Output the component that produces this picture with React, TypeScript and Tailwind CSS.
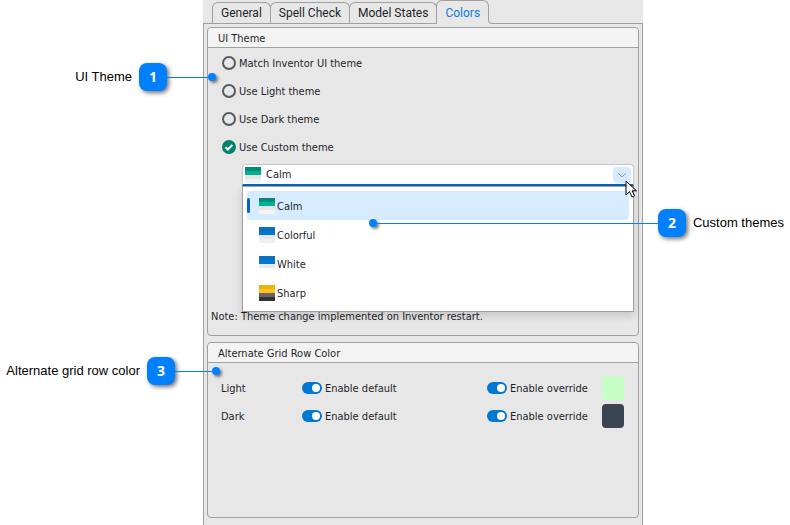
import React, { useState } from 'react'

type Theme = { name: string; bands: [string, string, string, string] }

const themes: Theme[] = [
  { name: 'Calm', bands: ['#028a76', '#00b294', '#e6e6e6', '#f3f3f3'] },
  { name: 'Colorful', bands: ['#106ebe', '#0078d4', '#e9e9e9', '#f0f0f0'] },
  { name: 'White', bands: ['#106ebe', '#0078d4', '#e9e9e9', '#ffffff'] },
  { name: 'Sharp', bands: ['#eab308', '#ffc020', '#666666', '#333333'] },
]

const modes = [
  'Match Inventor UI theme',
  'Use Light theme',
  'Use Dark theme',
  'Use Custom theme',
]

const rows = [
  { name: 'Light', swatch: 'bg-[#c5ffc5]' },
  { name: 'Dark', swatch: 'bg-[#3b4452]' },
]

function ThemeIcon({ theme, className }: { theme: Theme; className?: string }) {
  return (
    <svg width="16" height="16" viewBox="0 0 16 16" className={className} aria-hidden="true">
      <rect width="16" height="4" fill={theme.bands[0]} />
      <rect y="4" width="16" height="4" fill={theme.bands[1]} />
      <rect y="8" width="16" height="4" fill={theme.bands[2]} />
      <rect y="12" width="16" height="4" fill={theme.bands[3]} />
    </svg>
  )
}

function Tab(props: { label: string; active?: boolean; onClick: () => void }) {
  return (
    <button
      type="button"
      role="tab"
      aria-selected={!!props.active}
      onClick={props.onClick}
      className={
        props.active
          ? 'relative -mb-px h-6 rounded-t-md border border-b-0 border-[#a0a0a0] bg-[#e7e7e7] px-2 text-xs text-[#0f7bd8]'
          : 'relative -mr-px h-[21px] rounded-t-md border border-b-0 border-[#a0a0a0] px-2 text-xs'
      }
    >
      {props.label}
      {props.active && (
        <svg width="4" height="4" className="absolute -right-1 bottom-0" aria-hidden="true">
          <path d="M0 0v4h4V3.5Q.5 3.500.5 0" fill="#e7e7e7" />
          <path d="M.5 0Q.5 3.500 4 3.500" fill="none" stroke="#a0a0a0" />
        </svg>
      )}
    </button>
  )
}

function Group(props: { title: string; className: string; children: React.ReactNode }) {
  return (
    <section className={`relative rounded border border-[#a0a0a0] ${props.className}`}>
      <h2 className="h-5 rounded-t border-b border-[#a0a0a0] bg-[#f3f3f3] px-2.5 pt-px leading-5">
        {props.title}
      </h2>
      {props.children}
    </section>
  )
}

function Badge({ children }: { children: React.ReactNode }) {
  return (
    <span className="flex size-7 shrink-0 items-center justify-center rounded-lg bg-[#0080ff] font-['Open_Sans',sans-serif] text-sm font-bold text-white shadow-[2px_2px_4px_rgba(0,0,0,0.55)]">
      {children}
    </span>
  )
}

function Dot() {
  return (
    <span className="size-2 shrink-0 rounded-full bg-[#0080ff] shadow-[2px_2px_3px_rgba(0,0,0,0.5)]" />
  )
}

function Callout(props: { n: number; text: string; line: string; side: 'left' | 'right'; className: string }) {
  return (
    <div
      className={`pointer-events-none absolute z-20 flex items-center whitespace-nowrap font-['Liberation_Sans',Arial,sans-serif] text-[13px] text-black ${
        props.side === 'right' ? 'flex-row-reverse' : ''
      } ${props.className}`}
    >
      <span className={props.side === 'right' ? 'ml-[7px]' : 'mr-[7px]'}>{props.text}</span>
      <Badge>{props.n}</Badge>
      <span className={`h-px bg-[#0080ff] ${props.line}`} />
      <Dot />
    </div>
  )
}

function Toggle({ label }: { label: string }) {
  const [on, setOn] = useState(true)
  return (
    <label className="flex items-center gap-[3px]">
      <input
        type="checkbox"
        role="switch"
        checked={on}
        onChange={() => setOn(!on)}
        className="flex h-3 w-5 appearance-none items-center rounded-full bg-[#8a8a8a] px-0.5 before:size-2 before:rounded-full before:bg-white checked:justify-end checked:bg-[#0078d4]"
      />
      <span className="pt-0.5">{label}</span>
    </label>
  )
}

function ThemePicker() {
  const [open, setOpen] = useState(true)
  const [selected, setSelected] = useState('Calm')
  const current = themes.find((theme) => theme.name === selected) ?? themes[0]

  return (
    <div className="relative ml-[34px] mr-1 mt-[3px]">
      <div className="relative">
        <select
          aria-label="Custom theme"
          value={selected}
          onChange={(e) => setSelected(e.target.value)}
          onMouseDown={(e) => {
            e.preventDefault()
            setOpen(!open)
          }}
          className="block h-[22px] w-full appearance-none rounded-t border border-b-2 border-[#c8c8c8] border-b-[#0067c0] bg-white pl-[23px] pt-0.5 outline-none"
        >
          {themes.map((theme) => (
            <option key={theme.name}>{theme.name}</option>
          ))}
        </select>
        <ThemeIcon theme={current} className="pointer-events-none absolute left-[3px] top-[3px]" />
        <span className="pointer-events-none absolute right-[3px] top-[3px] flex h-4 w-[18px] items-center justify-center rounded bg-[#d6ebff]">
          <svg width="10" height="6" viewBox="0 0 10 6" fill="none" stroke="#8c9cac" aria-hidden="true">
            <path d="M1 1l4 4 4-4" />
          </svg>
        </span>
        <svg width="13" height="19" viewBox="0 0 13 19" className="pointer-events-none absolute -right-1 top-4 z-20" aria-hidden="true">
          <path d="M1 1v14l3.500-3.300 2.500 5.300 2.500-1.200-2.300-5H11.500z" fill="#fff" stroke="#000" />
        </svg>
      </div>
      {open && (
        <ul
          role="listbox"
          aria-label="Themes"
          className="absolute inset-x-0 top-[22px] z-10 border border-[#a0a0a0] bg-white px-1 py-1 shadow-[0_4px_8px_rgba(0,0,0,0.14)]"
        >
          {themes.map((theme) => (
            <li
              key={theme.name}
              role="option"
              aria-selected={theme.name === selected}
              onClick={() => setSelected(theme.name)}
              className={`relative flex h-[29px] items-center gap-0.5 rounded pl-3 ${
                theme.name === selected ? 'bg-[#d6ebff]' : ''
              }`}
            >
              {theme.name === selected && (
                <span className="absolute left-0 h-[15px] w-[3px] rounded-full bg-[#0067c0]" />
              )}
              <ThemeIcon theme={theme} />
              <span className="pt-1">{theme.name}</span>
            </li>
          ))}
        </ul>
      )}
      <Callout n={2} text="Custom themes" line="flex-1" side="right" className="-right-[150px] left-[127px] top-[45px]" />
    </div>
  )
}

export default function App() {
  const [tab, setTab] = useState('Colors')
  const [mode, setMode] = useState('Use Custom theme')

  return (
    <div className="min-h-screen overflow-hidden bg-white pl-[203px] pr-[147px] font-['DejaVu_Sans_Condensed','Open_Sans',sans-serif] text-[11px] text-[#1f1f2b]">
      <main className="flex min-h-screen flex-col bg-[#e7e7e7]">
        <div role="tablist" className="flex h-[23px] items-end pl-[9px] font-['Roboto',sans-serif]">
          {['General', 'Spell Check', 'Model States', 'Colors'].map((label) => (
            <Tab key={label} label={label} active={label === tab} onClick={() => setTab(label)} />
          ))}
        </div>
        <div className="flex-1 border-x border-t border-[#a0a0a0] px-[3px] pb-[7px] pt-[3px]">
          <Group title="UI Theme" className="pb-[10px]">
            <div role="radiogroup" aria-label="UI Theme" className="pl-3.5 pt-px">
              {modes.map((label) => (
                <label key={label} className="flex h-7 w-fit items-center gap-[3px]">
                  <span className="relative size-3.5">
                    <input
                      type="radio"
                      name="mode"
                      checked={mode === label}
                      onChange={() => setMode(label)}
                      className="block size-3.5 appearance-none rounded-full border-2 border-[#565c60] checked:border-[#00826c] checked:bg-[#00826c]"
                    />
                    {mode === label && (
                      <svg viewBox="0 0 14 14" className="pointer-events-none absolute inset-0" fill="none" stroke="#fff" strokeWidth="2" aria-hidden="true">
                        <path d="M3.500 7.200l2.300 2.300 4.600-4.600" />
                      </svg>
                    )}
                  </span>
                  <span className="pt-0.5">{label}</span>
                </label>
              ))}
            </div>
            <ThemePicker />
            <p className="mt-[123px] pl-[3px] leading-4">Note: Theme change implemented on Inventor restart.</p>
            <Callout n={1} text="UI Theme" line="w-[41px]" side="left" className="right-[422px] top-[35px]" />
          </Group>
          <Group title="Alternate Grid Row Color" className="mt-1.5 min-h-44">
            <div className="grid grid-cols-[81px_1fr_115px_22px] items-center gap-y-1 pl-[13px] pr-3.5 pt-[13px]">
              {rows.map((row) => (
                <React.Fragment key={row.name}>
                  <span className="pt-0.5">{row.name}</span>
                  <Toggle label="Enable default" />
                  <Toggle label="Enable override" />
                  <button type="button" aria-label={`${row.name} row color`} className={`h-6 rounded ${row.swatch}`} />
                </React.Fragment>
              ))}
            </div>
            <Callout n={3} text="Alternate grid row color" line="w-[37px]" side="left" className="right-[418px] top-3.5" />
          </Group>
        </div>
      </main>
    </div>
  )
}
